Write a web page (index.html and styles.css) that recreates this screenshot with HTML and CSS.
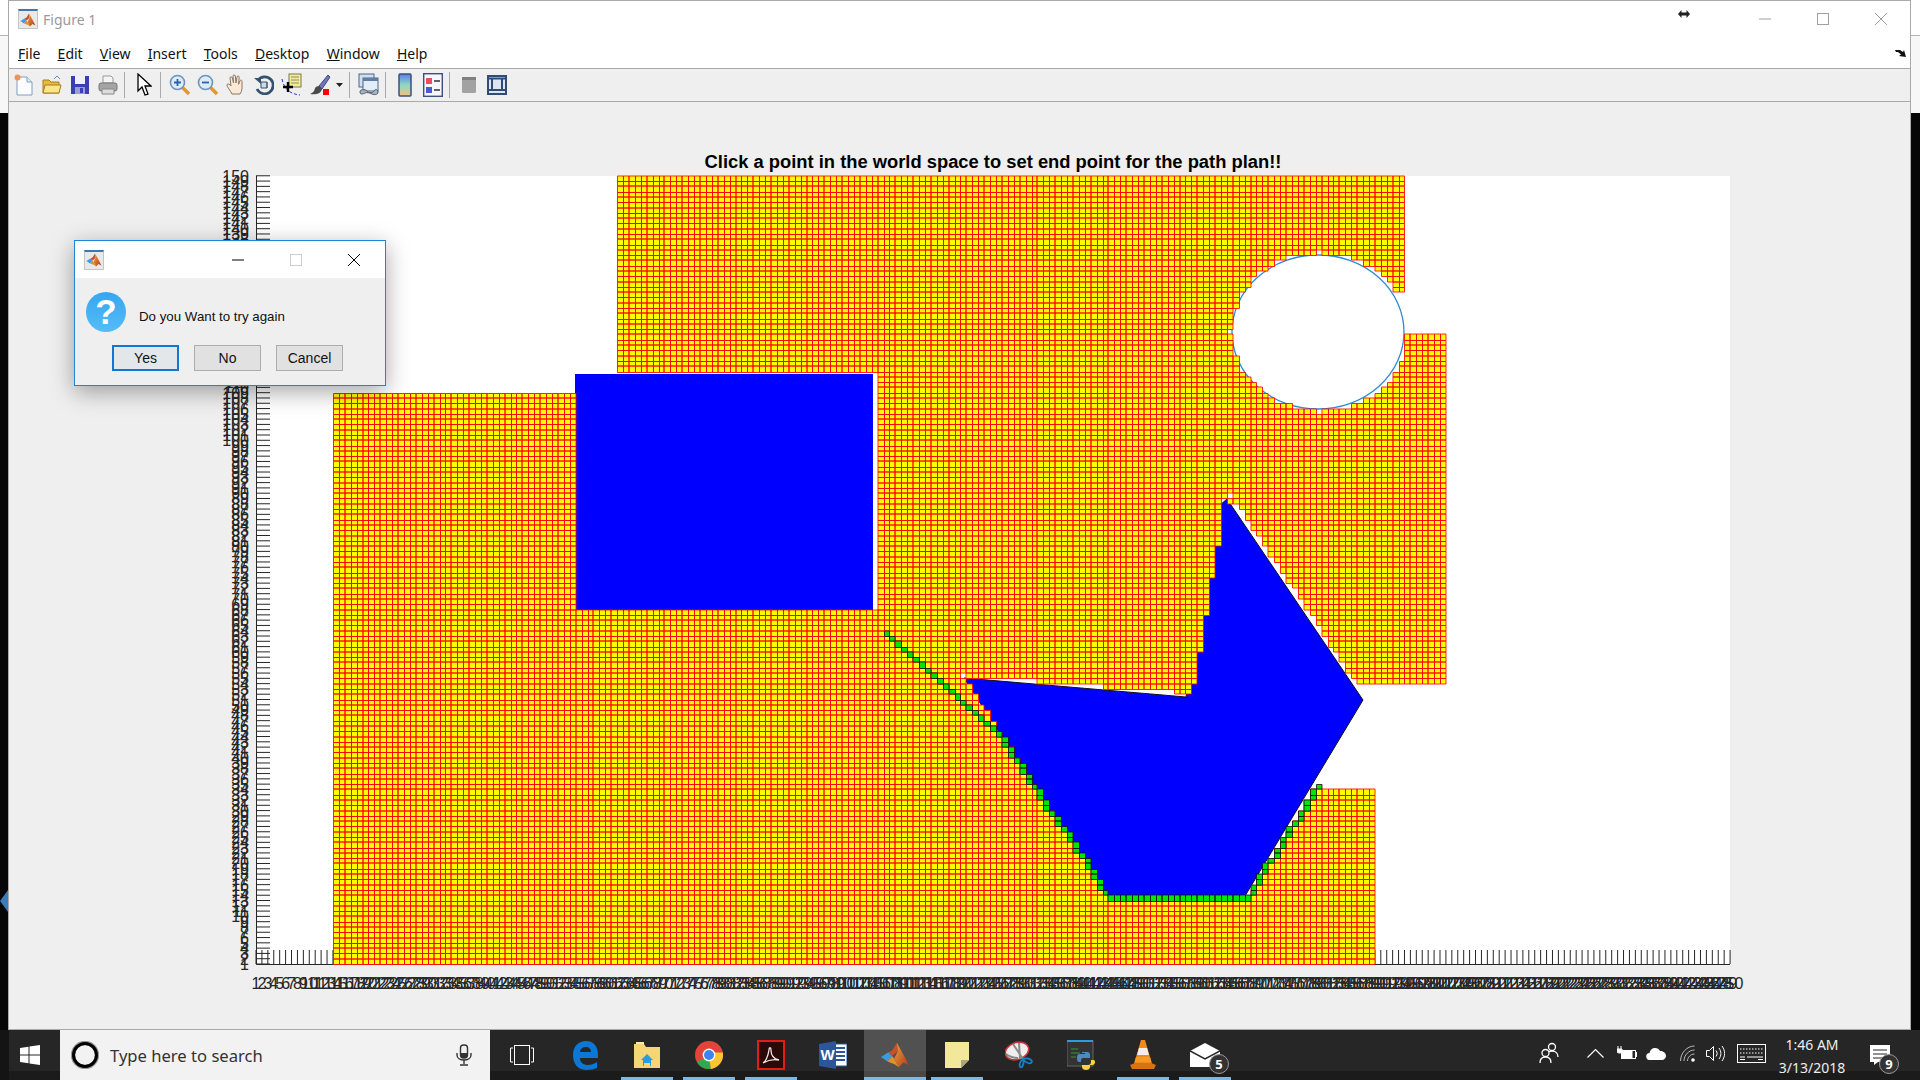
FILE: index.html
```html
<!DOCTYPE html>
<html lang="en">
<head>
    <meta charset="UTF-8">
    <title>Figure 1</title>
    <link rel="stylesheet" href="styles.css">
</head>
<body>
<svg class="defs" width="0" height="0">
    <defs>
        <linearGradient id="peak" x1="0" y1="0" x2="1" y2="1">
            <stop offset="0" stop-color="#e8a83a"/>
            <stop offset="1" stop-color="#b8321c"/>
        </linearGradient>
        <symbol id="matlab" viewBox="0 0 32 32">
            <polygon points="1,18 9,13 13,17 8,23" fill="#3b9ae0"/>
            <polygon points="9,13 13,11 18,3 19,12 13,17" fill="#c8502a"/>
            <polygon points="18,3 22,10 31,27 25,24 20,29 15,20 19,12" fill="url(#peak)"/>
            <polygon points="13,17 15,20 20,29 16,26 8,23" fill="#e09030"/>
        </symbol>
    </defs>
</svg>
<div class="desktop">
    <div class="back-window"></div>
    <div class="desk-mark"></div>

    <div class="figure">
        <div class="titlebar">
            <span class="app-icon"><svg width="16" height="16"><use href="#matlab"/></svg></span>
            <span class="figure-name">Figure 1</span>
            <div class="controls">
                <span class="control"><svg width="12" height="12" viewBox="0 0 12 12"><path d="M0 6h12" class="glyph-grey"/></svg></span>
                <span class="control"><svg width="12" height="12" viewBox="0 0 12 12"><rect x=".5" y=".5" width="11" height="11" class="glyph-grey"/></svg></span>
                <span class="control"><svg width="12" height="12" viewBox="0 0 12 12"><path d="M0 0l12 12M12 0L0 12" class="glyph-grey"/></svg></span>
            </div>
        </div>
        <div class="menubar">
            <span class="menu"><u>F</u>ile</span>
            <span class="menu"><u>E</u>dit</span>
            <span class="menu"><u>V</u>iew</span>
            <span class="menu"><u>I</u>nsert</span>
            <span class="menu"><u>T</u>ools</span>
            <span class="menu"><u>D</u>esktop</span>
            <span class="menu"><u>W</u>indow</span>
            <span class="menu"><u>H</u>elp</span>
            <svg class="undock" width="11" height="9" viewBox="0 0 11 9"><path d="M0 1h5l3 2 1-2 2 7-7-1 2-1.500-3-2.500H1z" fill="#111"/></svg>
        </div>
        <div class="toolbar">
            <span class="tool"><svg width="20" height="22" viewBox="0 0 20 22"><path d="M3 3h10l5 5v13H3z" fill="#fdfdff" stroke="#7f9fc0"/><path d="M13 3v5h5" fill="#dfe8f4" stroke="#7f9fc0"/><circle cx="3.500" cy="3.500" r="3" fill="#f0925a"/></svg></span>
            <span class="tool"><svg width="20" height="20" viewBox="0 0 20 20"><path d="M1 5h6l2 2h8v11H1z" fill="#e8b93c" stroke="#a37f1e"/><path d="M1 18l2-8h16l-2 8z" fill="#fbe48a" stroke="#a37f1e"/><path d="M12 4l3-3 3 3" fill="none" stroke="#6d8fb5"/></svg></span>
            <span class="tool"><svg width="20" height="20" viewBox="0 0 20 20"><path d="M1 1h18v18H1z" fill="#3b3fb4"/><rect x="5" y="1" width="10" height="8" fill="#eef0fa"/><rect x="5" y="12" width="10" height="7" fill="#9b9dd8"/><rect x="10" y="13" width="3" height="5" fill="#3b3fb4"/></svg></span>
            <span class="tool"><svg width="20" height="20" viewBox="0 0 20 20"><path d="M5 8V1h8l2 2v5z" fill="#f4f4f4" stroke="#999"/><rect x="1" y="8" width="18" height="8" rx="2" fill="#a4a4a4" stroke="#777"/><path d="M4 14h12v5H4z" fill="#dcdcdc" stroke="#888"/></svg></span>
            <span class="sep"></span>
            <span class="tool"><svg width="16" height="24" viewBox="0 0 16 24"><path d="M2 1v17l4-4 3 8 3-1-3-8h6z" fill="#fff" stroke="#000" stroke-width="1.300"/></svg></span>
            <span class="sep"></span>
            <span class="tool"><svg width="22" height="22" viewBox="0 0 22 22"><path d="M13 13l7 7" stroke="#e39a2c" stroke-width="3.500"/><circle cx="8.500" cy="8.500" r="7" fill="#dcebfa" stroke="#6d93bb" stroke-width="1.600"/><path d="M5 8.500h7M8.500 5v7" stroke="#2b62a8" stroke-width="1.800"/></svg></span>
            <span class="tool"><svg width="22" height="22" viewBox="0 0 22 22"><path d="M13 13l7 7" stroke="#e39a2c" stroke-width="3.500"/><circle cx="8.500" cy="8.500" r="7" fill="#dcebfa" stroke="#6d93bb" stroke-width="1.600"/><path d="M5 8.500h7" stroke="#2b62a8" stroke-width="1.800"/></svg></span>
            <span class="tool"><svg width="20" height="22" viewBox="0 0 20 22"><path d="M6 20C4 16 1 13 1 11c0-1.500 2-1.500 3 0l1 1-1-8c0-1.500 2-1.500 2.500 0l1 5-.5-7c0-1.500 2-1.500 2.300 0l.7 7 1-6c.3-1.500 2.300-1.200 2.200.3l-.7 7 1.500-3.500c.7-1.200 2.300-.6 2 .8L16 15c-.5 2-1 3.500-2 5z" fill="#fbe9d7" stroke="#8a7764"/></svg></span>
            <span class="tool"><svg width="20" height="20" viewBox="0 0 20 20"><path d="M4 5A8.500 8.500 0 1 1 3 14" fill="none" stroke="#34526f" stroke-width="2.800"/><path d="M0 3h7v6z" fill="#34526f"/><path d="M7 7h6v6H7z" fill="#cfd9e3" stroke="#34526f"/><path d="M13 7v6" stroke="#34526f"/></svg></span>
            <span class="tool"><svg width="22" height="24" viewBox="0 0 22 24"><rect x="8" y="1" width="12" height="13" fill="#f3ec9e" stroke="#7b7a4a"/><path d="M10 4h8M10 7h8M10 10h8" stroke="#8f8e60"/><path d="M1 6c2 10 8 15 18 16" fill="none" stroke="#2a2ae0" stroke-dasharray="3 2"/><path d="M2 14h10M7 9v10" stroke="#000" stroke-width="2.400"/></svg></span>
            <span class="tool"><svg width="22" height="22" viewBox="0 0 22 22"><path d="M19 1l-9 11 3 3L21 3z" fill="#6a78b8" stroke="#3f4a85"/><path d="M10 12c-4 0-4 3-5 5-.5 1-2 2-4 3 5 1 11 0 12-5z" fill="#4a4a4a"/><rect x="14" y="15" width="6" height="6" fill="#f00"/></svg></span>
            <span class="tool-drop"><svg width="7" height="4" viewBox="0 0 7 4"><path d="M0 0h7L3.500 4z" fill="#222"/></svg></span>
            <span class="sep sep-drop"></span>
            <span class="tool"><svg width="22" height="24" viewBox="0 0 22 24"><rect x="1" y="1" width="15" height="13" fill="#cfdff0" stroke="#4a6788"/><rect x="5" y="5" width="15" height="13" fill="#e4edf7" stroke="#4a6788"/><rect x="5" y="5" width="15" height="3" fill="#5d7fa5"/><path d="M2 19c0-3 5-3 7-1s6 2 7 0 4-2 4 1-4 3-6 2-5-2-7-1-5 2-5-1z" fill="#a6b4c0" stroke="#4f5d6b"/></svg></span>
            <span class="sep"></span>
            <span class="tool"><svg width="14" height="24" viewBox="0 0 14 24"><defs><linearGradient id="cbar" x1="0" y1="0" x2="0" y2="1"><stop offset="0" stop-color="#5b7ee8"/><stop offset=".5" stop-color="#8fd8c4"/><stop offset="1" stop-color="#f0c27a"/></linearGradient></defs><rect x="1" y="1" width="12" height="22" rx="1" fill="url(#cbar)" stroke="#3a5278" stroke-width="1.500"/></svg></span>
            <span class="tool"><svg width="20" height="24" viewBox="0 0 20 24"><rect x=".7" y=".7" width="18.600" height="22.600" fill="#f7f7fb" stroke="#3a5278" stroke-width="1.400"/><rect x="3" y="5" width="6" height="6" fill="#e8505a"/><rect x="3" y="14" width="6" height="6" fill="#4a58d8"/><path d="M11 8h6M11 17h6" stroke="#333" stroke-width="1.500"/></svg></span>
            <span class="sep"></span>
            <span class="tool"><svg width="14" height="16" viewBox="0 0 14 16"><rect width="14" height="16" rx="1.500" fill="#a2a2a2"/><rect width="14" height="3" fill="#808080"/></svg></span>
            <span class="tool"><svg width="20" height="20" viewBox="0 0 20 20"><rect x="1" y="1" width="18" height="18" fill="#dde6f0" stroke="#2f4c78" stroke-width="2"/><path d="M1 3.500h18M1 15h18M5 3v12M15 3v12" stroke="#2f4c78" stroke-width="2"/></svg></span>
        </div>
        <svg id="plot" class="plot" width="1901" height="927" viewBox="9 102 1901 927">
            <rect class="axes-bg" x="256" y="176" width="1474" height="788"/>
            <path id="ticks" class="ticks"/>
            <rect class="solid" x="575" y="374" width="298" height="236"/>
            <polygon class="solid solid-edge" points="1227,499 1363,700 1245,896 1106,898 964,678 1186,697 1220,505"/>
            <ellipse class="round" cx="1318" cy="332" rx="86" ry="77"/>
            <path id="cells" class="cells"/>
            <path id="route" class="route"/>
            <text class="plot-title" x="993" y="168">Click a point in the world space to set end point for the path plan!!</text>
            <g id="labels"></g>
        </svg>
    </div>

    <div class="dialog">
        <div class="dialog-bar">
            <span class="app-icon dialog-icon"><svg width="16" height="16"><use href="#matlab"/></svg></span>
            <div class="controls">
                <span class="control control-small"><svg width="12" height="12" viewBox="0 0 12 12"><path d="M0 6h12" stroke="#000"/></svg></span>
                <span class="control control-small"><svg width="12" height="12" viewBox="0 0 12 12"><rect x=".5" y=".5" width="11" height="11" fill="none" stroke="#ccc"/></svg></span>
                <span class="control control-small"><svg width="12" height="12" viewBox="0 0 12 12"><path d="M0 0l12 12M12 0L0 12" stroke="#000"/></svg></span>
            </div>
        </div>
        <div class="dialog-body">
            <div class="dialog-message">
                <svg width="40" height="40" viewBox="0 0 40 40">
                    <defs><linearGradient id="ask" x1="0" y1="0" x2="0" y2="1"><stop offset="0" stop-color="#35a6ef"/><stop offset="1" stop-color="#54bdf8"/></linearGradient></defs>
                    <circle cx="20" cy="20" r="20" fill="url(#ask)"/>
                    <text class="ask-mark" x="20" y="32">?</text>
                </svg>
                <span class="message-text">Do you Want to try again</span>
            </div>
            <div class="dialog-buttons">
                <span class="btn btn-default">Yes</span>
                <span class="btn">No</span>
                <span class="btn">Cancel</span>
            </div>
        </div>
    </div>

    <div class="cursor-mark"><svg width="12" height="8" viewBox="0 0 12 8"><path d="M0 4l3.500-4v2.500h5V0L12 4 8.500 8V5.500h-5V8z" fill="#222"/></svg></div>
</div>

<div class="taskbar">
    <span class="task-edge"></span>
    <span class="start"><svg width="20" height="20" viewBox="0 0 20 20"><path d="M0 3l8.500-1.200v7.700H0zM9.500 1.600L20 0v9.500H9.500zM0 10.500h8.500v7.700L0 17zM9.500 10.500H20V20L9.500 18.400z" fill="#fff"/></svg></span>
    <div class="search">
        <svg width="28" height="28" viewBox="0 0 28 28"><circle cx="14" cy="14" r="12" fill="none" stroke="#999" stroke-width="4.500"/><circle cx="14" cy="14" r="11.500" fill="none" stroke="#000" stroke-width="3"/></svg>
        <span class="search-text">Type here to search</span>
        <svg class="mic" width="16" height="22" viewBox="0 0 16 22"><rect x="4.500" y="1" width="7" height="13" rx="3" fill="none" stroke="#333" stroke-width="1.400"/><rect x="5" y="9" width="6" height="5" fill="#333"/><path d="M1 9v2c0 3 3 5 7 5s7-2 7-5V9M8 16v4M4 21h8" fill="none" stroke="#333" stroke-width="1.400"/></svg>
    </div>
    <span class="task-view"><svg width="24" height="20" viewBox="0 0 24 20"><rect x="4.500" y=".5" width="15" height="19" fill="none" stroke="#fff"/><path d="M3 3H.5v14H3M21 3h2.500v14H21" fill="none" stroke="#fff"/></svg></span>

    <span class="app"><svg width="28" height="30" viewBox="0 0 28 30"><path d="M2 15C2 6 8 1 15 1c8 0 12 6 12 14v3H9c0 5 4 7 8 7 3 0 6-1 9-3v6c-3 1-6 2-10 2C7 30 2 24 2 15zm7-3h11c0-3-2-5-5-5-3 0-6 2-6 5z" fill="#0a78d4"/></svg></span>
    <span class="app running"><svg width="26" height="28" viewBox="0 0 26 28"><path d="M0 3h10l2 3h14v21H0z" fill="#f6d574"/><path d="M2 1h8v2H2z" fill="#f9e9a8"/><path d="M7 19l6-6 6 6h-2v6H9v-6z" fill="#2a9be0"/><rect x="10" y="22" width="6" height="4" fill="#f6d574"/></svg></span>
    <span class="app running"><svg width="28" height="28" viewBox="0 0 28 28"><circle cx="14" cy="14" r="14" fill="#e2433a"/><path d="M14 14L1.900 21A14 14 0 0 0 16 27.900z" fill="#2fa84f"/><path d="M14 14l1.800 13.900A14 14 0 0 0 27.800 11.500H14z" fill="#fbc531"/><circle cx="14" cy="14" r="6.400" fill="#fff"/><circle cx="14" cy="14" r="5" fill="#3f83ee"/></svg></span>
    <span class="app running"><svg width="28" height="30" viewBox="0 0 28 30"><rect x="1" y="1" width="26" height="28" fill="#2a0a08" stroke="#e01e12" stroke-width="2"/><path d="M6 23c3-2 5-7 6-13 0-3 2-3 2 0 0 5 3 9 8 10-5-1-11 0-16 3z" fill="none" stroke="#f2e8e6" stroke-width="1.300"/></svg></span>
    <span class="app"><svg width="28" height="28" viewBox="0 0 28 28"><rect x="13" y="3" width="15" height="22" fill="#fff" stroke="#2b579a"/><path d="M16 7h10M16 11h10M16 15h10M16 19h10" stroke="#2b579a" stroke-width="2"/><path d="M0 3l17-3v28L0 25z" fill="#2b579a"/><text class="word-mark" x="8.500" y="19">W</text></svg></span>
    <span class="app running active"><svg width="30" height="30"><use href="#matlab"/></svg></span>
    <span class="app running"><svg width="24" height="26" viewBox="0 0 24 26"><path d="M0 0h24v18l-8 8H0z" fill="#f3e79b"/><path d="M24 18h-8v8z" fill="#a9a583"/></svg></span>
    <span class="app"><svg width="28" height="28" viewBox="0 0 28 28"><ellipse cx="12" cy="10" rx="12" ry="8.500" transform="rotate(-18 12 10)" fill="#eee" stroke="#c8353a" stroke-width="1.600"/><path d="M8 3l10 15M14 2l1 16" stroke="#8a8a8a" stroke-width="2"/><path d="M1 13c4 3 8 4 12 4" fill="none" stroke="#888" stroke-width="2"/><path d="M18 18c1 3 .5 6-1 8-2 1-3-1-2-4 .5-2 2-3 3-4zM18 18c2-1 6-1 8 1s0 4-3 3c-2-.5-4-2-5-4z" fill="none" stroke="#1681c8" stroke-width="1.800"/></svg></span>
    <span class="app"><svg width="28" height="30" viewBox="0 0 28 30"><rect x="0" y="1" width="26" height="25" fill="#333" stroke="#666"/><rect x="0" y="0" width="26" height="2" fill="#2f9bd8"/><path d="M4 9h7M4 13h9M4 17h5" stroke="#28a03c"/><path d="M15 12h5c2 0 3 1 3 3v3h-7c-2 0-2 2-2 4h-2c-2 0-2-3-2-5s1-3 3-3h5v-1h-3z" fill="#4b8bbe"/><path d="M28 22c0 2-1 3-3 3h-2v2c0 2-2 3-4 3s-4-1-4-3v-2h6c2 0 3-1 3-3v-2h1c2 0 3 0 3 2z" fill="#ffd43b"/></svg></span>
    <span class="app running"><svg width="26" height="32" viewBox="0 0 26 32"><path d="M11 1h4l7 24H4z" fill="#f08a1c"/><path d="M9 9h8l2 7H7z" fill="#eee"/><path d="M0 26l5-2h16l5 2-2 4H2z" fill="#d9730f"/><path d="M6 18h14l1.500 5h-17z" fill="#f49a24"/></svg></span>
    <span class="app running has-badge"><svg width="30" height="24" viewBox="0 0 30 24"><path d="M0 8L15 0l15 8v16H0z" fill="#fff"/><path d="M0 8l15 8 15-8" fill="none" stroke="#222" stroke-width="1.500"/></svg><span class="badge">5</span></span>

    <div class="tray">
        <svg class="tray-people" width="20" height="22" viewBox="0 0 20 22"><circle cx="13" cy="5" r="3.500" fill="none" stroke="#fff" stroke-width="1.300"/><path d="M7 15c0-4 3-6 6-6s6 2 6 6" fill="none" stroke="#fff" stroke-width="1.300"/><circle cx="6.500" cy="11" r="3.500" fill="#262626" stroke="#fff" stroke-width="1.300"/><path d="M1 21c0-4 2-6 5.500-6s5.500 2 5.500 6" fill="none" stroke="#fff" stroke-width="1.300"/></svg>
        <svg class="tray-chevron" width="17" height="10" viewBox="0 0 17 10"><path d="M.5 9.500l8-8 8 8" fill="none" stroke="#fff" stroke-width="1.200"/></svg>
        <svg class="tray-battery" width="20" height="14" viewBox="0 0 20 14"><rect x="4.500" y="4.500" width="14" height="8" fill="#262626" stroke="#fff"/><rect x="4.500" y="4.500" width="11" height="8" fill="#fff"/><rect x="19" y="6" width="1" height="5" fill="#fff"/><path d="M1 0v3M4 0v3M0 3h5v2a2 2 0 0 1-2 2H2a2 2 0 0 1-2-2z" stroke="#fff" fill="#fff"/></svg>
        <svg class="tray-cloud" width="20" height="13" viewBox="0 0 20 13"><path d="M4 13a3.500 3.500 0 0 1-.5-7C4 3 6 1 9 1c2.500 0 4 1 5 3 3-.5 6 2 6 5 0 2-2 4-4 4z" fill="#fff"/></svg>
        <svg class="tray-wifi" width="15" height="17" viewBox="0 0 15 17"><path d="M.5 16C.5 8 7 1 14.500 1M4 16c0-6 5-11 10.500-11M7.500 16c0-3.500 3-7 7-7" fill="none" stroke="#bbb"/><circle cx="13" cy="15" r="1.800" fill="#fff"/></svg>
        <svg class="tray-speaker" width="19" height="17" viewBox="0 0 19 17"><path d="M.5 5.500h3l4-4v14l-4-4h-3z" fill="none" stroke="#fff"/><path d="M10 5.500c1.500 2 1.500 4 0 6M13 3c2.500 3.500 2.500 7.500 0 11M16 1c3.500 5 3.500 10 0 15" fill="none" stroke="#fff"/></svg>
        <svg class="tray-keyboard" width="29" height="19" viewBox="0 0 29 19"><rect x=".5" y=".5" width="28" height="18" fill="none" stroke="#fff"/><path d="M3 5h23M3 9h23" stroke="#fff" stroke-dasharray="1.500 1.500"/><path d="M3 13h5M10 13h16M3 15.500h5M21 15.500h5" stroke="#fff"/></svg>
        <div class="clock"><span>1:46 AM</span><span>3/13/2018</span></div>
        <span class="notify"><svg width="20" height="20" viewBox="0 0 20 20"><path d="M0 0h20v17H8l-4 3v-3H0z" fill="#fff"/><path d="M3 5h14M3 9h14M3 13h10" stroke="#262626" stroke-width="1.200"/></svg><span class="badge badge-notify">9</span></span>
    </div>
</div>
<script src="script.js"></script>
</body>
</html>
```

FILE: styles.css
```css
* {
    box-sizing: border-box;
}
html, body {
    margin: 0;
    height: 100%;
    overflow: hidden;
}
body {
    display: flex;
    flex-direction: column;
    background: #000;
    font-family: "Noto Sans", "Open Sans", sans-serif;
}
svg {
    display: block;
    flex-shrink: 0;
}
.defs {
    position: absolute;
}
.desktop {
    position: relative;
    flex: 1;
    background: #060606;
}
.back-window {
    position: absolute;
    left: 0;
    right: 0;
    top: 0;
    height: 113px;
    background: linear-gradient(#fff 35px, #b5b5b5 35px, #b5b5b5 36px, #f7f7f7 36px);
}
.desk-mark {
    position: absolute;
    left: 0;
    top: 890px;
    width: 8px;
    height: 22px;
    background: #3c7cb8;
    clip-path: polygon(0 50%, 100% 0, 100% 100%);
}
.figure {
    position: absolute;
    left: 8px;
    top: 0;
    width: 1903px;
    height: 1030px;
    display: flex;
    flex-direction: column;
    background: #efefef;
    border: 1px solid #a9a9a9;
}
.titlebar {
    display: flex;
    align-items: center;
    height: 43px;
    padding-left: 9px;
    padding-bottom: 7px;
    background: #fff;
}
.app-icon {
    display: flex;
    align-items: center;
    justify-content: center;
    width: 20px;
    height: 20px;
    background: #e9e9e9;
    border: 1px solid #c4c4c4;
    border-top: 2px solid #3a78b0;
}
.figure-name {
    margin-left: 5px;
    font-size: 14px;
    color: #9a9a9a;
}
.controls {
    display: flex;
    margin-left: auto;
}
.control {
    display: flex;
    align-items: center;
    justify-content: center;
    width: 58px;
    height: 30px;
}
.control-small {
    height: 36px;
}
.glyph-grey {
    fill: none;
    stroke: #a0a0a0;
}
.menubar {
    display: flex;
    align-items: center;
    gap: 17.200px;
    height: 24px;
    padding-left: 9px;
    padding-bottom: 5px;
    background: #fff;
    font-size: 14px;
    color: #111;
}
.menu u {
    text-decoration-thickness: 1px;
}
.undock {
    margin-left: auto;
    margin-right: 4px;
}
.toolbar {
    display: flex;
    align-items: center;
    height: 34px;
    padding-left: 1px;
    background: #efefef;
    border-top: 1px solid #a9a9a9;
    border-bottom: 1px solid #a9a9a9;
}
.tool {
    display: flex;
    align-items: center;
    justify-content: center;
    width: 28px;
    height: 30px;
}
.tool-drop {
    display: flex;
    justify-content: flex-end;
    width: 9px;
}
.sep {
    width: 1px;
    height: 26px;
    margin: 0 5px 0 2px;
    background: #a9a9a9;
}
.sep-drop {
    margin-left: 6px;
}
.plot {
    background: #efefef;
}
.axes-bg {
    fill: #fff;
}
.ticks {
    fill: none;
    stroke: #262626;
    stroke-width: 1;
}
.solid {
    fill: #0000ff;
}
.solid-edge {
    stroke: #111;
    stroke-width: 1;
}
.round {
    fill: #fff;
    stroke: #2d8bd0;
    stroke-width: 1.300;
}
.cells {
    fill: #ffff00;
    stroke: #ff0000;
    stroke-width: 0.850;
}
.route {
    fill: #00e600;
    stroke: #101010;
    stroke-width: 0.800;
}
.plot-title {
    font-family: "Liberation Sans", Arial, sans-serif;
    font-size: 18.350px;
    font-weight: bold;
    text-anchor: middle;
    fill: #000;
}
.xtick, .ytick {
    font-family: "Liberation Sans", Arial, sans-serif;
    font-size: 16px;
    fill: #262626;
}
.xtick {
    text-anchor: middle;
}
.ytick {
    text-anchor: end;
}
.dialog {
    position: absolute;
    left: 74px;
    top: 240px;
    width: 312px;
    height: 146px;
    background: #efefef;
    border: 1px solid #1a86d9;
    box-shadow: 0 6px 22px rgba(0, 0, 0, 0.35);
}
.dialog-bar {
    display: flex;
    align-items: center;
    height: 37px;
    padding-left: 9px;
    padding-right: 2px;
    background: #fff;
}
.dialog-body {
    padding: 14px 0 0 11px;
}
.dialog-message {
    display: flex;
    align-items: center;
    gap: 13px;
    font-family: "Liberation Sans", Arial, sans-serif;
    font-size: 13.300px;
    color: #111;
}
.message-text {
    padding-top: 9px;
}
.ask-mark {
    font-family: "Liberation Sans", Arial, sans-serif;
    font-size: 35px;
    font-weight: bold;
    text-anchor: middle;
    fill: #fff;
}
.dialog-buttons {
    display: flex;
    gap: 15px;
    margin-top: 13px;
    padding-left: 26px;
}
.btn {
    display: flex;
    align-items: center;
    justify-content: center;
    width: 67px;
    height: 26px;
    background: #e1e1e1;
    border: 1px solid #adadad;
    font-family: "Liberation Sans", Arial, sans-serif;
    font-size: 14px;
    color: #111;
}
.btn-default {
    background: #e3e7ea;
    border: 2px solid #0f78d4;
}
.cursor-mark {
    position: absolute;
    left: 1678px;
    top: 10px;
}
.taskbar {
    display: flex;
    align-items: center;
    height: 50px;
    flex-shrink: 0;
    background: linear-gradient(#262626 41px, #1b1b1b 41px);
    color: #fff;
}
.task-edge {
    width: 9px;
    height: 50px;
    background: #141414;
}
.start {
    display: flex;
    align-items: center;
    width: 51px;
    height: 50px;
    padding-left: 11px;
}
.search {
    display: flex;
    align-items: center;
    width: 430px;
    height: 50px;
    padding-left: 11px;
    background: #f2f2f2;
    color: #333;
}
.search-text {
    margin-left: 11px;
    font-size: 16.600px;
}
.mic {
    margin-left: auto;
    margin-right: 18px;
}
.task-view {
    display: flex;
    align-items: center;
    justify-content: center;
    width: 64px;
    height: 50px;
}
.app {
    position: relative;
    display: flex;
    align-items: center;
    justify-content: center;
    width: 62px;
    height: 50px;
}
.running::after {
    content: "";
    position: absolute;
    left: 5px;
    right: 5px;
    bottom: 0;
    height: 3px;
    background: #76b9ed;
}
.active {
    background: rgba(255, 255, 255, 0.2);
}
.active::after {
    left: 0;
    right: 0;
}
.badge {
    position: absolute;
    left: 35px;
    top: 24px;
    display: flex;
    align-items: center;
    justify-content: center;
    width: 20px;
    height: 20px;
    border: 1px solid #999;
    border-radius: 50%;
    background: #333;
    font-size: 13px;
    font-weight: bold;
    color: #fff;
}
.tray {
    display: flex;
    align-items: center;
    margin-left: auto;
    height: 50px;
    padding-bottom: 4px;
    padding-right: 25px;
}
.tray-chevron {
    margin-left: 28px;
}
.tray-battery {
    margin-left: 13px;
}
.tray-cloud {
    margin-left: 9px;
}
.tray-wifi {
    margin-left: 14px;
}
.tray-speaker {
    margin-left: 11px;
}
.tray-keyboard {
    margin-left: 12px;
}
.clock {
    display: flex;
    flex-direction: column;
    align-items: center;
    width: 70px;
    margin-left: 11px;
    margin-right: -2px;
    margin-top: 5px;
    font-size: 14px;
    line-height: 23px;
    color: #eee;
}
.notify {
    position: relative;
    width: 50px;
    padding-left: 25px;
    margin-top: 4px;
}
.badge-notify {
    left: 34px;
    top: 9px;
}
.word-mark {
    font-family: "Liberation Sans", Arial, sans-serif;
    font-size: 15px;
    font-weight: bold;
    text-anchor: middle;
    fill: #fff;
}
```

FILE: script.js
```js
// axes layout, in page pixels
const X0 = 256;
const Y0 = 964;
const DX = 5.92;
const DY = 5.29;

const obstacle = [[1229, 499], [1363, 700], [1245, 896], [1111, 896], [970, 679], [1196, 696]];
const whiteSpots = [[1318, 252], [1318, 410], [1230, 332], [1230, 495], [963, 676],
    [1224, 501], [1224, 506], [1224, 511], [1224, 516], [1224, 522], [970, 682]];
const routePoints = [[887, 634], [963, 703], [998, 735], [1034, 785], [1082, 853], [1105, 892],
    [1110, 899], [1250, 899], [1318, 787]];

function colOf(x) { return Math.floor((x - X0) / DX); }
function rowOf(y) { return Math.floor((Y0 - y) / DY); }

function inObstacle(x, y) {
    let inside = false;
    for (let i = 0, j = obstacle.length - 1; i < obstacle.length; j = i++) {
        const [xi, yi] = obstacle[i];
        const [xj, yj] = obstacle[j];
        if ((yi > y) !== (yj > y) && x < (xj - xi) * (y - yi) / (yj - yi) + xi) inside = !inside;
    }
    return inside;
}

function inCircle(x, y) {
    return ((x - 1319.5) / 84.5) ** 2 + ((y - 331.5) / 75.5) ** 2 < 1;
}

function inRegion(c, r) {
    if (c < 13) return false;
    if (r < 33) return c < 189;
    if (r < 53) return c < 179;
    if (r < 108) return c < 201;
    if (c < 61) return false;
    if (r < 119) return c < 201;
    if (r < 127) return c < 190;
    return c < 194;
}

// the lines land on pixel edges or pixel centres, like the resampled original:
// some come out as a sharp red line, the others as a soft orange band
function lineX(c) {
    return Math.round(X0 + c * DX) + (c % 3 !== 0 ? 0.5 : 0);
}
function lineY(r) {
    return Math.round(Y0 - r * DY) + (r % 2 === 0 ? 0.5 : 0);
}

function cellPath(c, r) {
    const x1 = lineX(c);
    const x2 = lineX(c + 1);
    const y1 = lineY(r + 1);
    const y2 = lineY(r);
    return `M${x1} ${y1}H${x2}V${y2}H${x1}z`;
}

function drawCells() {
    const spots = new Set(whiteSpots.map(([x, y]) => colOf(x) + ',' + rowOf(y)));
    let d = '';
    for (let r = 0; r < 149; r++) {
        for (let c = 13; c < 201; c++) {
            if (!inRegion(c, r) || spots.has(c + ',' + r)) continue;
            if (c >= 54 && c < 105 && r >= 67 && r < 112) continue;
            const x = X0 + c * DX;
            const y = Y0 - r * DY;
            const corners = [[x, y], [x + DX, y], [x, y - DY], [x + DX, y - DY]];
            if (corners.some(([a, b]) => inObstacle(a, b) || inCircle(a, b))) continue;
            d += cellPath(c, r);
        }
    }
    document.getElementById('cells').setAttribute('d', d);
}

function drawRoute() {
    const seen = new Set();
    let d = '';
    for (let i = 0; i < routePoints.length - 1; i++) {
        const [c1, r1] = [colOf(routePoints[i][0]), rowOf(routePoints[i][1])];
        const [c2, r2] = [colOf(routePoints[i + 1][0]), rowOf(routePoints[i + 1][1])];
        const steps = Math.max(Math.abs(c2 - c1), Math.abs(r2 - r1), 1);
        for (let s = 0; s <= steps; s++) {
            const c = Math.round(c1 + (c2 - c1) * s / steps);
            const r = Math.round(r1 + (r2 - r1) * s / steps);
            if (seen.has(c + ',' + r)) continue;
            seen.add(c + ',' + r);
            d += cellPath(c, r);
        }
    }
    document.getElementById('route').setAttribute('d', d);
}

function drawAxes() {
    const labels = document.getElementById('labels');
    let d = `M${X0 + 0.5} 176V${Y0 + 0.5}H1730`;
    for (let k = 0; k < 150; k++) {
        const y = Y0 - k * DY;
        d += `M${X0} ${y.toFixed(2)}h14`;
        addLabel(labels, 'ytick', 249, y + 6, k + 1);
    }
    for (let k = 0; k < 250; k++) {
        const x = X0 + k * DX;
        d += `M${x.toFixed(2)} ${Y0}v-14`;
        addLabel(labels, 'xtick', x, 989, k + 1);
    }
    document.getElementById('ticks').setAttribute('d', d);
}

function addLabel(parent, cls, x, y, value) {
    const t = document.createElementNS('http://www.w3.org/2000/svg', 'text');
    t.setAttribute('class', cls);
    t.setAttribute('x', x.toFixed(2));
    t.setAttribute('y', y.toFixed(2));
    t.textContent = value;
    parent.appendChild(t);
}

drawAxes();
drawCells();
drawRoute();
```
